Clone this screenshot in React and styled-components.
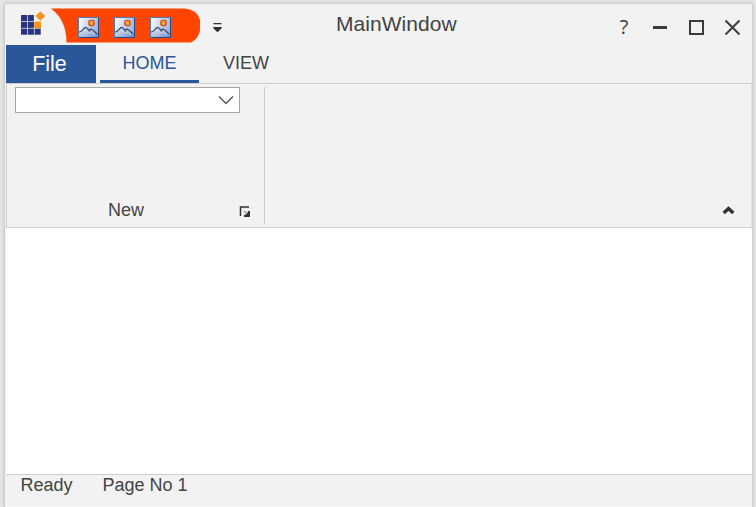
import React from "react";
import styled, { createGlobalStyle } from "styled-components";

const Global = createGlobalStyle`
  * { box-sizing: border-box; }
  html, body { margin: 0; height: 100%; overflow: hidden; background: #e8e8e8; }
  body { font-family: "Liberation Sans", Arial, sans-serif; color: #444; }
  svg { display: block; flex: none; }
`;

const Desktop = styled.div`
  height: 507px;
  width: 756px;
  overflow: hidden;
  padding: 4px 4px 0 5px;
`;

const Window = styled.div`
  display: flex;
  flex-direction: column;
  height: 503px;
  padding-left: 1px;
  background: #f2f2f2;
  box-shadow: 0 0 0 1px #cfcfcf, 0 0 5px 1px #c4c4c4;
`;

const TitleBar = styled.header`
  display: grid;
  grid-template-columns: 224px 1fr 137px;
  height: 41px;
`;

const QuickAccess = styled.div`
  display: flex;
  align-items: flex-start;
`;

const Logo = styled.svg`
  margin: 7px 5px 0 14px;
`;

const QuickStrip = styled.div`
  display: grid;
  margin: 4px 13px 0 0;
  > * { grid-area: 1 / 1; }
`;

const QuickItems = styled.div`
  display: flex;
  gap: 15px;
  padding: 9px 0 0 27px;
`;

const Overflow = styled.svg`
  margin-top: 19px;
`;

const Title = styled.h1`
  margin: 8px 0 0;
  padding-left: 106px;
  font-size: 21px;
  line-height: 24px;
  font-weight: 400;
  letter-spacing: 0.05px;
  white-space: nowrap;
`;

const Controls = styled.div`
  display: flex;
  gap: 18px;
  padding-top: 14px;
`;

const ControlButton = styled.button`
  display: flex;
  justify-content: center;
  width: 18px;
  height: 18px;
  padding: 0;
  border: 0;
  background: none;
  color: #3b3b3b;
  font: 500 20px/18px "Open Sans", "Noto Sans", sans-serif;
`;

const Tabs = styled.nav`
  display: flex;
  height: 38px;
`;

const FileTab = styled.button`
  width: 90px;
  padding: 0 3px 0 0;
  border: 0;
  background: #2a579a;
  color: #fff;
  font: 21.5px/37px "Liberation Sans", Arial, sans-serif;
`;

const Tab = styled.button`
  height: 38px;
  width: ${(p) => p.$width}px;
  margin-left: ${(p) => (p.$active ? 4 : 0)}px;
  padding: 2px 0 0;
  border: 0;
  border-bottom: 3px solid ${(p) => (p.$active ? "#2a579a" : "transparent")};
  background: none;
  color: ${(p) => (p.$active ? "#2a579a" : "#444")};
  font: 18px/33px "Liberation Sans", Arial, sans-serif;
`;

const Ribbon = styled.section`
  display: flex;
  justify-content: space-between;
  height: 145px;
  border: 1px solid #cecece;
  border-right-color: #e0e0e0;
`;

const Group = styled.div`
  display: flex;
  flex-direction: column;
  justify-content: space-between;
  width: 258px;
  height: 137px;
  margin-top: 3px;
  border-right: 1px solid #cecece;
`;

const Combo = styled.div`
  display: flex;
  align-items: center;
  justify-content: flex-end;
  width: 225px;
  height: 26px;
  margin-left: 8px;
  padding-right: 5px;
  border: 1px solid #a5a5a5;
  background: #fff;
`;

const GroupFooter = styled.div`
  display: flex;
  justify-content: space-between;
  padding: 0 14px 4px 101px;
  font-size: 18px;
  line-height: 20px;
`;

const Launcher = styled.svg`
  margin-top: 6px;
`;

const Collapse = styled.svg`
  align-self: flex-end;
  margin: 0 16px 12px 0;
`;

const Content = styled.main`
  flex: 1;
  background: #fff;
`;

const StatusBar = styled.footer`
  display: flex;
  gap: 30px;
  height: 33px;
  padding: 0 0 0 14.5px;
  border-top: 1px solid #cecece;
  border-bottom: 1px solid #fafafa;
  font-size: 18px;
  line-height: 20px;
`;

function AppLogo() {
  return (
    <Logo width="26" height="26" viewBox="0 0 26 26">
      <g fill="#28347f">
        {[0, 1, 2].flatMap((row) =>
          [0, 1, 2]
            .filter((col) => !(row < 2 && col === 2))
            .map((col) => (
              <rect key={`${row}-${col}`} x={1 + col * 6.8} y={4 + row * 6.8} width="6.1" height="6.1" />
            ))
        )}
      </g>
      <rect x="14.2" y="10.5" width="6.8" height="6.8" rx="0.5" fill="#f7941d" />
      <path d="M20.3 .8 25 5.1l-4.700 4.300L15.600 5.100Z" fill="#f7941d" stroke="#f7941d" strokeWidth=".4" />
    </Logo>
  );
}

function StripShape() {
  return (
    <svg width="149" height="35" viewBox="0 0 149 35">
      <path d="M0 .5H134Q149.5 2 149.5 17Q149.5 30 140 34.5H15.5C15.5 18 9 7 0 .5Z" fill="#ff4500" />
    </svg>
  );
}

function PictureIcon() {
  return (
    <svg width="21" height="21" viewBox="0 0 21 21">
      <defs>
        <linearGradient id="sky" x2="1" y2=".4">
          <stop stopColor="#fff" />
          <stop offset="1" stopColor="#9fb4e2" />
        </linearGradient>
        <linearGradient id="hill" x2="1" y2="1">
          <stop stopColor="#f4f6fa" />
          <stop offset="1" stopColor="#6f8cc4" />
        </linearGradient>
      </defs>
      <path d="M.5.5h20v20H.5Z" fill="url(#sky)" stroke="#4d78b0" />
      <path d="M1 15 4 13l4-3 3 3 3 2 3-3 3 3v5H1Z" fill="url(#hill)" />
      <path d="m1 15 2-.5 4-4 2 .5 3 3.500m-1-1.500 2-1 3 2 3 3" fill="none" stroke="#3d4c68" strokeWidth="1.2" />
      <path d="m7 13 4 3 2-1 4 3" fill="none" stroke="#c9d2e2" strokeWidth="1" />
      <rect x="11" y="3.500" width="5" height="5" rx="1.500" fill="#f6ad43" stroke="#d9551b" strokeWidth="1.6" />
      <path d="M20.500 1v19.500H1" fill="none" stroke="#264b8c" />
    </svg>
  );
}

export default function App() {
  return (
    <>
      <Global />
      <Desktop>
        <Window>
          <TitleBar>
            <QuickAccess>
              <AppLogo />
              <QuickStrip>
                <StripShape />
                <QuickItems>
                  <PictureIcon />
                  <PictureIcon />
                  <PictureIcon />
                </QuickItems>
              </QuickStrip>
              <Overflow width="9" height="10" viewBox="0 0 9 10">
                <path d="M.5 0h8v1.200h-8ZM.3 4h8.400v1.300L4.500 9.300.3 5.300Z" fill="#333" />
              </Overflow>
            </QuickAccess>
            <Title>MainWindow</Title>
            <Controls>
              <ControlButton aria-label="Help">?</ControlButton>
              <ControlButton aria-label="Minimize">
                <svg width="18" height="18"><path d="M2 8h14v3H2Z" fill="currentColor" /></svg>
              </ControlButton>
              <ControlButton aria-label="Maximize">
                <svg width="18" height="18"><path d="M3 3h13v13H3Z" fill="none" stroke="currentColor" strokeWidth="2" /></svg>
              </ControlButton>
              <ControlButton aria-label="Close">
                <svg width="18" height="18"><path d="m2.500 2.500 14 14m0-14-14 14" stroke="currentColor" strokeWidth="1.9" /></svg>
              </ControlButton>
            </Controls>
          </TitleBar>
          <Tabs>
            <FileTab>File</FileTab>
            <Tab $active $width={99}>HOME</Tab>
            <Tab $width={94}>VIEW</Tab>
          </Tabs>
          <Ribbon>
            <Group>
              <Combo>
                <svg width="16" height="10" viewBox="0 0 16 10">
                  <path d="m1 1.500 7 7 7-7" fill="none" stroke="#555" strokeWidth="1.4" />
                </svg>
              </Combo>
              <GroupFooter>
                New
                <Launcher width="11" height="11" viewBox="0 0 11 11">
                  <path d="M1.500 10V1h8.500" fill="none" stroke="#333" strokeWidth="1.500" />
                  <path d="M5 5 8 8" stroke="#999" strokeWidth="1.2" />
                  <path d="M11 5v6H5V9l3-1 1-3Z" fill="#333" />
                </Launcher>
              </GroupFooter>
            </Group>
            <Collapse width="13" height="9" viewBox="0 0 13 9">
              <path d="m1.700 7 4.800-4.500 4.800 4.500" fill="none" stroke="#333" strokeWidth="3.400" />
            </Collapse>
          </Ribbon>
          <Content />
          <StatusBar>
            <span>Ready</span>
            <span>Page No 1</span>
          </StatusBar>
        </Window>
      </Desktop>
    </>
  );
}
